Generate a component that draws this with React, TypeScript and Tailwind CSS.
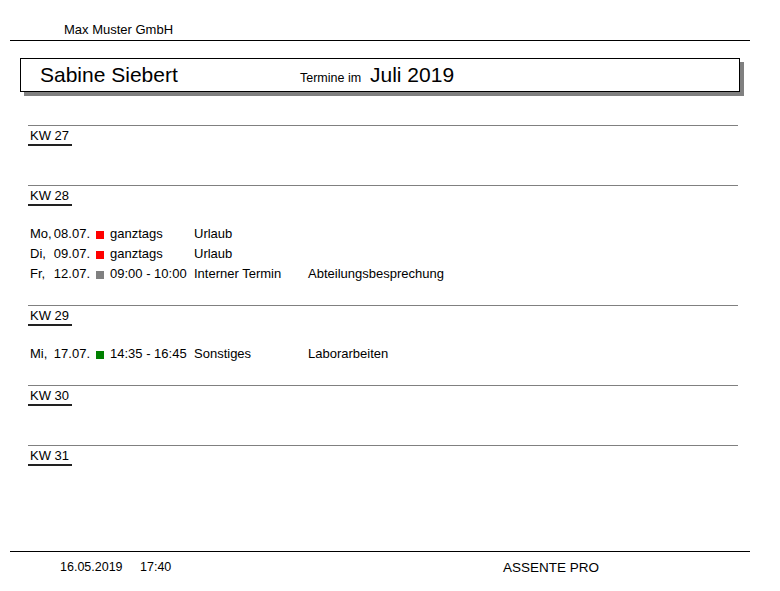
import React from 'react';

type Entry = {
  day: string;
  date: string;
  color: string;
  time: string;
  type: string;
  text?: string;
};

type Week = {
  kw: number;
  entries: Entry[];
};

const weeks: Week[] = [
  { kw: 27, entries: [] },
  {
    kw: 28,
    entries: [
      { day: 'Mo,', date: '08.07.', color: 'bg-[#ff0000]', time: 'ganztags', type: 'Urlaub' },
      { day: 'Di,', date: '09.07.', color: 'bg-[#ff0000]', time: 'ganztags', type: 'Urlaub' },
      {
        day: 'Fr,',
        date: '12.07.',
        color: 'bg-[#808080]',
        time: '09:00 - 10:00',
        type: 'Interner Termin',
        text: 'Abteilungsbesprechung',
      },
    ],
  },
  {
    kw: 29,
    entries: [
      {
        day: 'Mi,',
        date: '17.07.',
        color: 'bg-[#008000]',
        time: '14:35 - 16:45',
        type: 'Sonstiges',
        text: 'Laborarbeiten',
      },
    ],
  },
  { kw: 30, entries: [] },
  { kw: 31, entries: [] },
];

const EntryRow: React.FC<{ entry: Entry }> = ({ entry }) => (
  <div className="flex items-center h-[20px] leading-[20px] text-[13px]">
    {/* weekday left, date right-aligned */}
    <div className="w-[62px] pl-[2px] flex justify-between">
      <span>{entry.day}</span>
      <span>{entry.date}</span>
    </div>
    <span className={`ml-[6px] w-[8px] h-[8px] mt-[2px] ${entry.color}`} />
    <span className="ml-[6px] w-[84px]">{entry.time}</span>
    <span className="w-[114px]">{entry.type}</span>
    {entry.text && <span>{entry.text}</span>}
  </div>
);

const WeekSection: React.FC<{ week: Week }> = ({ week }) => (
  <div className="pb-[21px]">
    <div className="h-px bg-[#808080]" />
    <div className="w-[44px] pl-[2px] pt-[2px] pb-[1px] text-[13px] leading-[15px] border-b-2 border-[#222] mb-[18px]">
      KW {week.kw}
    </div>
    {week.entries.map((entry, index) => (
      <EntryRow key={index} entry={entry} />
    ))}
  </div>
);

export default function App() {
  return (
    <div
      className="w-[780px] h-[591px] bg-white text-black overflow-hidden"
      style={{ fontFamily: '"Liberation Sans", Arial, sans-serif' }}
    >
      {/* Header */}
      <div className="pt-[22px] pl-[64px] text-[13px] leading-[15px]">Max Muster GmbH</div>
      <div className="mt-[3px] ml-[10px] w-[740px] h-px bg-black" />

      {/* Title box */}
      <div className="mt-[17px] ml-[20px] w-[720px] h-[34px] border border-black shadow-[4px_4px_0_#808080] flex items-baseline pt-[4px] pl-[19px]">
        <span className="w-[260px] text-[21px] leading-[24px]">Sabine Siebert</span>
        <span className="w-[70px] text-[12.5px]">Termine im</span>
        <span className="text-[21px] leading-[24px]">Juli 2019</span>
      </div>

      {/* Weeks */}
      <div className="mt-[33px] ml-[28px] w-[710px]">
        {weeks.map((week) => (
          <WeekSection key={week.kw} week={week} />
        ))}
      </div>

      {/* Footer */}
      <div className="mt-[46px] ml-[10px] w-[740px] h-px bg-black" />
      <div className="mt-[8px] flex text-[12.5px] leading-[15px]">
        <span className="ml-[60px] w-[80px]">16.05.2019</span>
        <span className="w-[363px]">17:40</span>
        <span className="text-[13.5px]">ASSENTE PRO</span>
      </div>
    </div>
  );
}
